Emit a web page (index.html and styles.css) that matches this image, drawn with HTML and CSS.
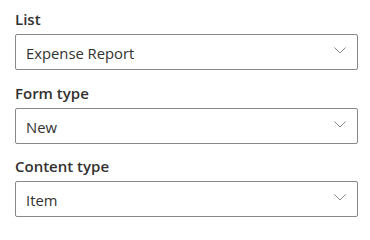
FILE: index.html
```html
<!DOCTYPE html>
<html>
<head>
<meta charset="utf-8">
<link rel="stylesheet" href="styles.css">
</head>
<body>
<div class="form">
  <div class="field">
    <div class="label">List</div>
    <div class="dropdown">
      <span class="value">Expense Report</span>
      <svg class="chev" width="12" height="7" viewBox="0 0 12 7"><path d="M0.5 0.5 L6 6 L11.5 0.5" fill="none" stroke="#8a8886" stroke-width="1"/></svg>
    </div>
  </div>
  <div class="field">
    <div class="label">Form type</div>
    <div class="dropdown">
      <span class="value">New</span>
      <svg class="chev" width="12" height="7" viewBox="0 0 12 7"><path d="M0.5 0.5 L6 6 L11.5 0.5" fill="none" stroke="#8a8886" stroke-width="1"/></svg>
    </div>
  </div>
  <div class="field">
    <div class="label">Content type</div>
    <div class="dropdown">
      <span class="value">Item</span>
      <svg class="chev" width="12" height="7" viewBox="0 0 12 7"><path d="M0.5 0.5 L6 6 L11.5 0.5" fill="none" stroke="#8a8886" stroke-width="1"/></svg>
    </div>
  </div>
</div>
</body>
</html>
```
FILE: styles.css
```css
html, body {
  margin: 0;
  padding: 0;
  background: #ffffff;
}
body {
  font-family: "Open Sans", "Noto Sans", sans-serif;
  color: #323130;
}
.form {
  padding: 9px 0 0 15px;
  display: flex;
  flex-direction: column;
  gap: 12.5px;
  width: 343px;
}
.field {
  display: flex;
  flex-direction: column;
  gap: 5px;
}
.label {
  font-size: 15px;
  font-weight: 600;
  line-height: 20px;
  height: 20px;
  color: #323130;
}
.dropdown {
  box-sizing: border-box;
  height: 36px;
  border: 1px solid #8a8886;
  border-radius: 2px;
  display: flex;
  align-items: center;
  justify-content: space-between;
  padding: 0 11px 0 10px;
}
.value {
  font-size: 14.8px;
  line-height: 20px;
  padding-top: 2px;
  color: #323130;
}
.chev {
  display: block;
  margin-top: -3px;
}
```
